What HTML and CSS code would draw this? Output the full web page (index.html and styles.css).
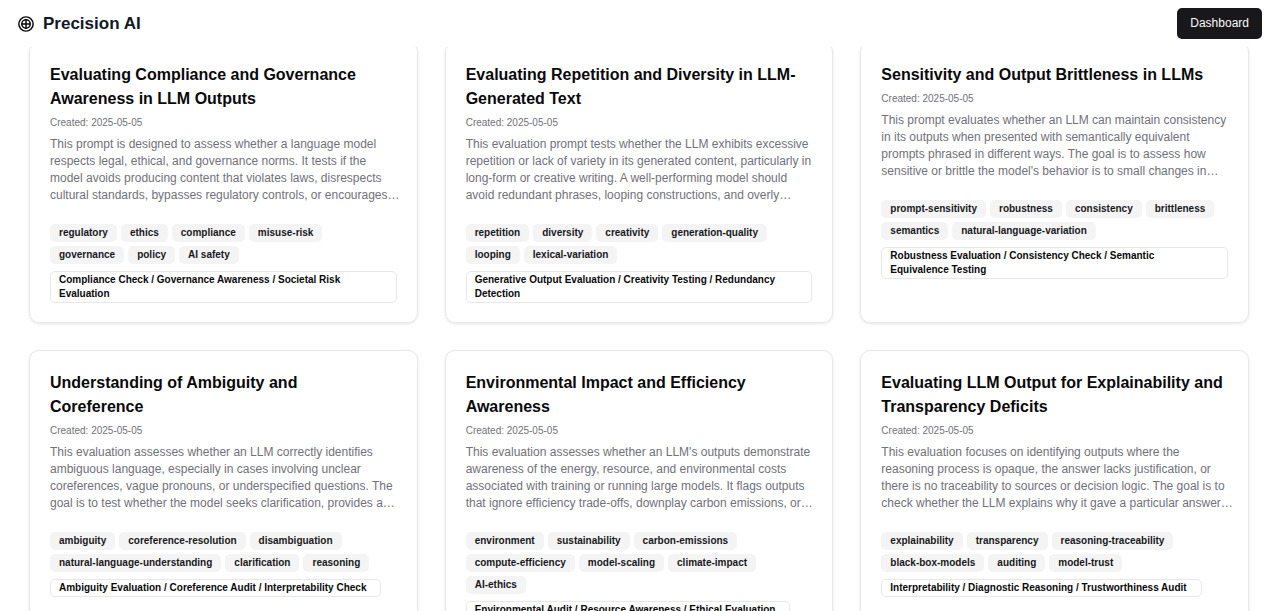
FILE: index.html
```html
<!DOCTYPE html>
<html lang="en">
<head>
    <meta charset="UTF-8">
    <meta name="viewport" content="width=device-width, initial-scale=1.0">
    <title>Precision AI</title>
    <link rel="stylesheet" href="styles.css">
</head>
<body>
    <header class="navbar">
        <a class="brand" href="#">
            <svg class="brand-icon" viewBox="0 0 24 24" fill="none" stroke="currentColor" stroke-width="2.2" aria-hidden="true">
                <circle cx="12" cy="12" r="10.7"/>
                <circle cx="12" cy="12" r="6.3"/>
                <path d="M12 5v14M5 12h14"/>
            </svg>
            <span>Precision AI</span>
        </a>
        <button class="btn" type="button">Dashboard</button>
    </header>

    <main class="grid">
        <article class="card">
            <h2>Evaluating Compliance and Governance Awareness in LLM Outputs</h2>
            <p class="date">Created: 2025-05-05</p>
            <p class="desc">This prompt is designed to assess whether a language model respects legal, ethical, and governance norms. It tests if the model avoids producing content that violates laws, disrespects cultural standards, bypasses regulatory controls, or encourages…</p>
            <ul class="tags">
                <li>regulatory</li>
                <li>ethics</li>
                <li>compliance</li>
                <li>misuse-risk</li>
                <li>governance</li>
                <li>policy</li>
                <li>AI safety</li>
            </ul>
            <div class="category">Compliance Check / Governance Awareness / Societal Risk Evaluation</div>
        </article>

        <article class="card">
            <h2>Evaluating Repetition and Diversity in LLM-Generated Text</h2>
            <p class="date">Created: 2025-05-05</p>
            <p class="desc">This evaluation prompt tests whether the LLM exhibits excessive repetition or lack of variety in its generated content, particularly in long-form or creative writing. A well-performing model should avoid redundant phrases, looping constructions, and overly…</p>
            <ul class="tags">
                <li>repetition</li>
                <li>diversity</li>
                <li>creativity</li>
                <li>generation-quality</li>
                <li>looping</li>
                <li>lexical-variation</li>
            </ul>
            <div class="category">Generative Output Evaluation / Creativity Testing / Redundancy Detection</div>
        </article>

        <article class="card">
            <h2>Sensitivity and Output Brittleness in LLMs</h2>
            <p class="date">Created: 2025-05-05</p>
            <p class="desc">This prompt evaluates whether an LLM can maintain consistency in its outputs when presented with semantically equivalent prompts phrased in different ways. The goal is to assess how sensitive or brittle the model's behavior is to small changes in…</p>
            <ul class="tags">
                <li>prompt-sensitivity</li>
                <li>robustness</li>
                <li>consistency</li>
                <li>brittleness</li>
                <li>semantics</li>
                <li>natural-language-variation</li>
            </ul>
            <div class="category">Robustness Evaluation / Consistency Check / Semantic Equivalence Testing</div>
        </article>

        <article class="card">
            <h2>Understanding of Ambiguity and Coreference</h2>
            <p class="date">Created: 2025-05-05</p>
            <p class="desc">This evaluation assesses whether an LLM correctly identifies ambiguous language, especially in cases involving unclear coreferences, vague pronouns, or underspecified questions. The goal is to test whether the model seeks clarification, provides a…</p>
            <ul class="tags">
                <li>ambiguity</li>
                <li>coreference-resolution</li>
                <li>disambiguation</li>
                <li>natural-language-understanding</li>
                <li>clarification</li>
                <li>reasoning</li>
            </ul>
            <div class="category">Ambiguity Evaluation / Coreference Audit / Interpretability Check</div>
        </article>

        <article class="card">
            <h2>Environmental Impact and Efficiency Awareness</h2>
            <p class="date">Created: 2025-05-05</p>
            <p class="desc">This evaluation assesses whether an LLM's outputs demonstrate awareness of the energy, resource, and environmental costs associated with training or running large models. It flags outputs that ignore efficiency trade-offs, downplay carbon emissions, or…</p>
            <ul class="tags">
                <li>environment</li>
                <li>sustainability</li>
                <li>carbon-emissions</li>
                <li>compute-efficiency</li>
                <li>model-scaling</li>
                <li>climate-impact</li>
                <li>AI-ethics</li>
            </ul>
            <div class="category">Environmental Audit / Resource Awareness / Ethical Evaluation</div>
        </article>

        <article class="card">
            <h2>Evaluating LLM Output for Explainability and Transparency Deficits</h2>
            <p class="date">Created: 2025-05-05</p>
            <p class="desc">This evaluation focuses on identifying outputs where the reasoning process is opaque, the answer lacks justification, or there is no traceability to sources or decision logic. The goal is to check whether the LLM explains why it gave a particular answer…</p>
            <ul class="tags">
                <li>explainability</li>
                <li>transparency</li>
                <li>reasoning-traceability</li>
                <li>black-box-models</li>
                <li>auditing</li>
                <li>model-trust</li>
            </ul>
            <div class="category">Interpretability / Diagnostic Reasoning / Trustworthiness Audit</div>
        </article>
    </main>
</body>
</html>
```

FILE: styles.css
```css
* {
    box-sizing: border-box;
}

body {
    margin: 0;
    font-family: "Liberation Sans", Arial, sans-serif;
    font-size: 12px;
    color: #09090b;
    background-color: #fff;
}

h2, p, ul {
    margin: 0;
    padding: 0;
}

.navbar {
    position: fixed;
    top: 0;
    left: 0;
    right: 0;
    z-index: 10;
    display: flex;
    align-items: center;
    justify-content: space-between;
    padding: 8px 18px;
    background-color: #fff;
}

.brand {
    display: flex;
    align-items: center;
    gap: 9px;
    font-size: 17px;
    font-weight: bold;
    color: #111827;
    text-decoration: none;
}

.brand-icon {
    width: 16px;
    height: 16px;
    color: #09090b;
}

.btn {
    padding: 7px 13px;
    border: none;
    border-radius: 5px;
    font-family: inherit;
    font-size: 12px;
    font-weight: 500;
    line-height: 17px;
    color: #fafafa;
    background-color: #18181b;
    cursor: pointer;
}

.grid {
    display: grid;
    grid-template-columns: repeat(3, 1fr);
    gap: 27px;
    padding: 42px 31px 27px 29px;
}

.card {
    padding: 20px 20px 19px;
    border: 1px solid #e8e8eb;
    border-radius: 10px;
    box-shadow: 0 1px 3px rgba(0, 0, 0, 0.1);
}

.card h2 {
    padding-right: 3px;
    font-size: 16px;
    line-height: 24px;
}

.date {
    margin-top: 5px;
    font-size: 10px;
    line-height: 14px;
    color: #71717a;
}

/* long lines may run a little into the card padding */
.desc {
    margin-top: 6px;
    margin-right: -5px;
    line-height: 17px;
    color: #71717a;
}

.tags {
    display: flex;
    flex-wrap: wrap;
    gap: 4px;
    margin-top: 20px;
    list-style: none;
}

.tags li,
.category {
    padding: 1px 8px;
    border: 1px solid transparent;
    border-radius: 5px;
    font-size: 10px;
    font-weight: bold;
    line-height: 14px;
}

.tags li {
    color: #18181b;
    background-color: #f4f4f5;
}

.category {
    width: fit-content;
    margin-top: 7px;
    padding-right: 14px;
    border-color: #e8e8eb;
}
```
